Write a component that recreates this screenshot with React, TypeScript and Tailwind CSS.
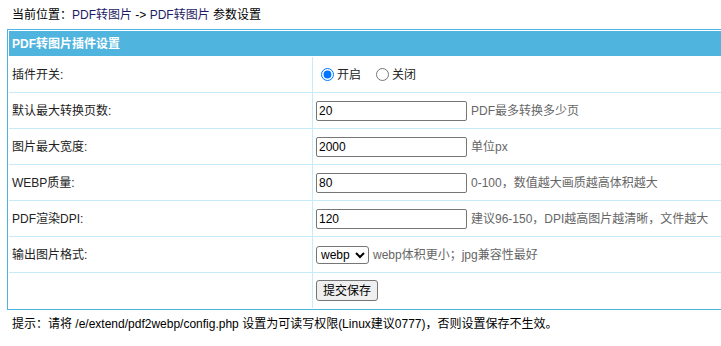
import React from "react";

const font = {
  fontFamily: '"Liberation Sans", "Noto Sans CJK SC", sans-serif',
};

const Row = ({ label, children }: { label: string; children: React.ReactNode }) => (
  <>
    <div className="bg-white h-[35px] flex items-center pl-[3px] text-[#222]">{label}</div>
    <div className="bg-white h-[35px] flex items-center pl-[3px]">{children}</div>
  </>
);

const Field = ({ value, hint }: { value: string; hint: string }) => (
  <div className="flex items-center">
    <input
      type="text"
      defaultValue={value}
      className="w-[151px] h-[20px] border border-[#767676] rounded-[2px] bg-white px-[2px] text-[12px] text-black outline-none"
    />
    <span className="ml-[4px] text-[#666]">{hint}</span>
  </div>
);

export default function App() {
  return (
    <div className="w-[721px] h-[346px] overflow-hidden bg-white text-[12px] leading-[16px] text-[#222]" style={font}>
      <div className="h-[29px] flex items-center pl-[12px] text-black">
        当前位置：<span className="text-[#1c1c66]">PDF转图片</span>&nbsp;-&gt;&nbsp;
        <span className="text-[#1c1c66]">PDF转图片</span>&nbsp;参数设置
      </div>

      <div className="ml-[7px] w-[760px] border border-[#4fb4de] bg-white p-px">
        <div className="h-[25px] bg-[#4fb4de] flex items-center pl-[3px] font-bold text-white mb-px">
          PDF转图片插件设置
        </div>
        <div className="grid grid-cols-[303px_1fr] gap-px bg-[#c6ecfb]">
          <Row label="插件开关:">
            <label className="flex items-center">
              <input type="radio" name="open" defaultChecked className="ml-[5px] mr-[3px] w-[13px] h-[13px]" />
              <span>开启</span>
            </label>
            <label className="flex items-center ml-[10px]">
              <input type="radio" name="open" className="ml-[5px] mr-[3px] w-[13px] h-[13px]" />
              <span>关闭</span>
            </label>
          </Row>
          <Row label="默认最大转换页数:">
            <Field value="20" hint="PDF最多转换多少页" />
          </Row>
          <Row label="图片最大宽度:">
            <Field value="2000" hint="单位px" />
          </Row>
          <Row label="WEBP质量:">
            <Field value="80" hint="0-100，数值越大画质越高体积越大" />
          </Row>
          <Row label="PDF渲染DPI:">
            <Field value="120" hint="建议96-150，DPI越高图片越清晰，文件越大" />
          </Row>
          <Row label="输出图片格式:">
            <div className="flex items-center">
              <select
                defaultValue="webp"
                className="w-[53px] h-[18px] border border-[#767676] rounded-[3px] bg-white text-[12px] text-black"
              >
                <option value="webp">webp</option>
                <option value="jpg">jpg</option>
              </select>
              <span className="ml-[4px] text-[#666]">webp体积更小；jpg兼容性最好</span>
            </div>
          </Row>
          <Row label="">
            <button className="h-[21px] px-[6px] border border-[#767676] rounded-[3px] bg-[#efefef] text-black">
              提交保存
            </button>
          </Row>
        </div>
      </div>

      <div className="h-[28px] flex items-center pl-[12px] text-black">
        提示：请将 /e/extend/pdf2webp/config.php 设置为可读写权限(Linux建议0777)，否则设置保存不生效。
      </div>
    </div>
  );
}
